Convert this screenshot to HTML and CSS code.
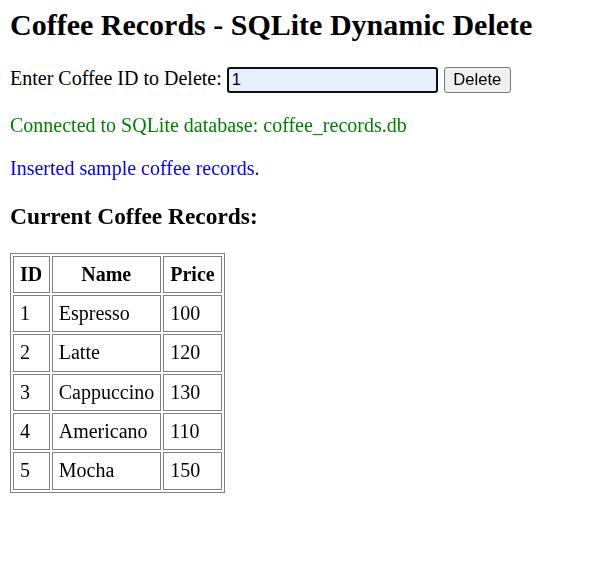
FILE: index.html
```html
<!DOCTYPE html>
<html>
<head>
<meta charset="utf-8">
<link rel="stylesheet" href="styles.css">
</head>
<body>
<h1 class="title">Coffee Records - SQLite Dynamic Delete</h1>
<form class="delete-form">
<label for="cid">Enter Coffee ID to Delete:</label>
<input id="cid" class="id-input" type="text" value="1" autofocus>
<button class="btn" type="button">Delete</button>
</form>
<p class="msg ok">Connected to SQLite database: coffee_records.db</p>
<p class="msg info">Inserted sample coffee records.</p>
<h3 class="sub">Current Coffee Records:</h3>
<table class="records">
<tr><th>ID</th><th>Name</th><th>Price</th></tr>
<tr><td>1</td><td>Espresso</td><td>100</td></tr>
<tr><td>2</td><td>Latte</td><td>120</td></tr>
<tr><td>3</td><td>Cappuccino</td><td>130</td></tr>
<tr><td>4</td><td>Americano</td><td>110</td></tr>
<tr><td>5</td><td>Mocha</td><td>150</td></tr>
</table>
</body>
</html>
```
FILE: styles.css
```css
body {
  margin: 8px 10px;
  font-family: "Liberation Serif", "Times New Roman", serif;
  font-size: 20px;
  color: #000;
  background: #fff;
}
.title {
  font-size: 30px;
  font-weight: bold;
  margin: 0 0 25px;
}
.delete-form {
  margin: 0;
}
.id-input {
  font-family: "Liberation Sans", Arial, sans-serif;
  font-size: 16.67px;
  box-sizing: border-box;
  width: 211px;
  height: 26px;
  padding: 1px 3px;
  margin: 0;
  border: 2px solid #101010;
  border-radius: 3px;
  background: #e8f0fe;
  color: #000;
  caret-color: #000;
  outline: none;
  vertical-align: baseline;
}
.btn {
  font-family: "Liberation Sans", Arial, sans-serif;
  font-size: 16.67px;
  box-sizing: border-box;
  width: 67px;
  height: 26px;
  padding: 0 8px;
  margin: 0 0 0 1px;
  border: 1px solid #767676;
  border-radius: 3px;
  background: #efefef;
  color: #000;
}
.msg {
  margin: 20px 0;
}
.ok {
  color: #008000;
  margin-top: 21px;
}
.info { color: #0000ff; }
.sub {
  font-size: 23.4px;
  font-weight: bold;
  margin: 23.4px 0 22.4px;
}
.records {
  border: 1px solid #808080;
  border-spacing: 2px;
}
.records th,
.records td {
  border: 1px solid #808080;
  padding: 6px;
  line-height: 23.3px;
}
.records th {
  font-weight: bold;
  text-align: center;
  padding-right: 6.5px;
}
.records td {
  text-align: left;
}
```
